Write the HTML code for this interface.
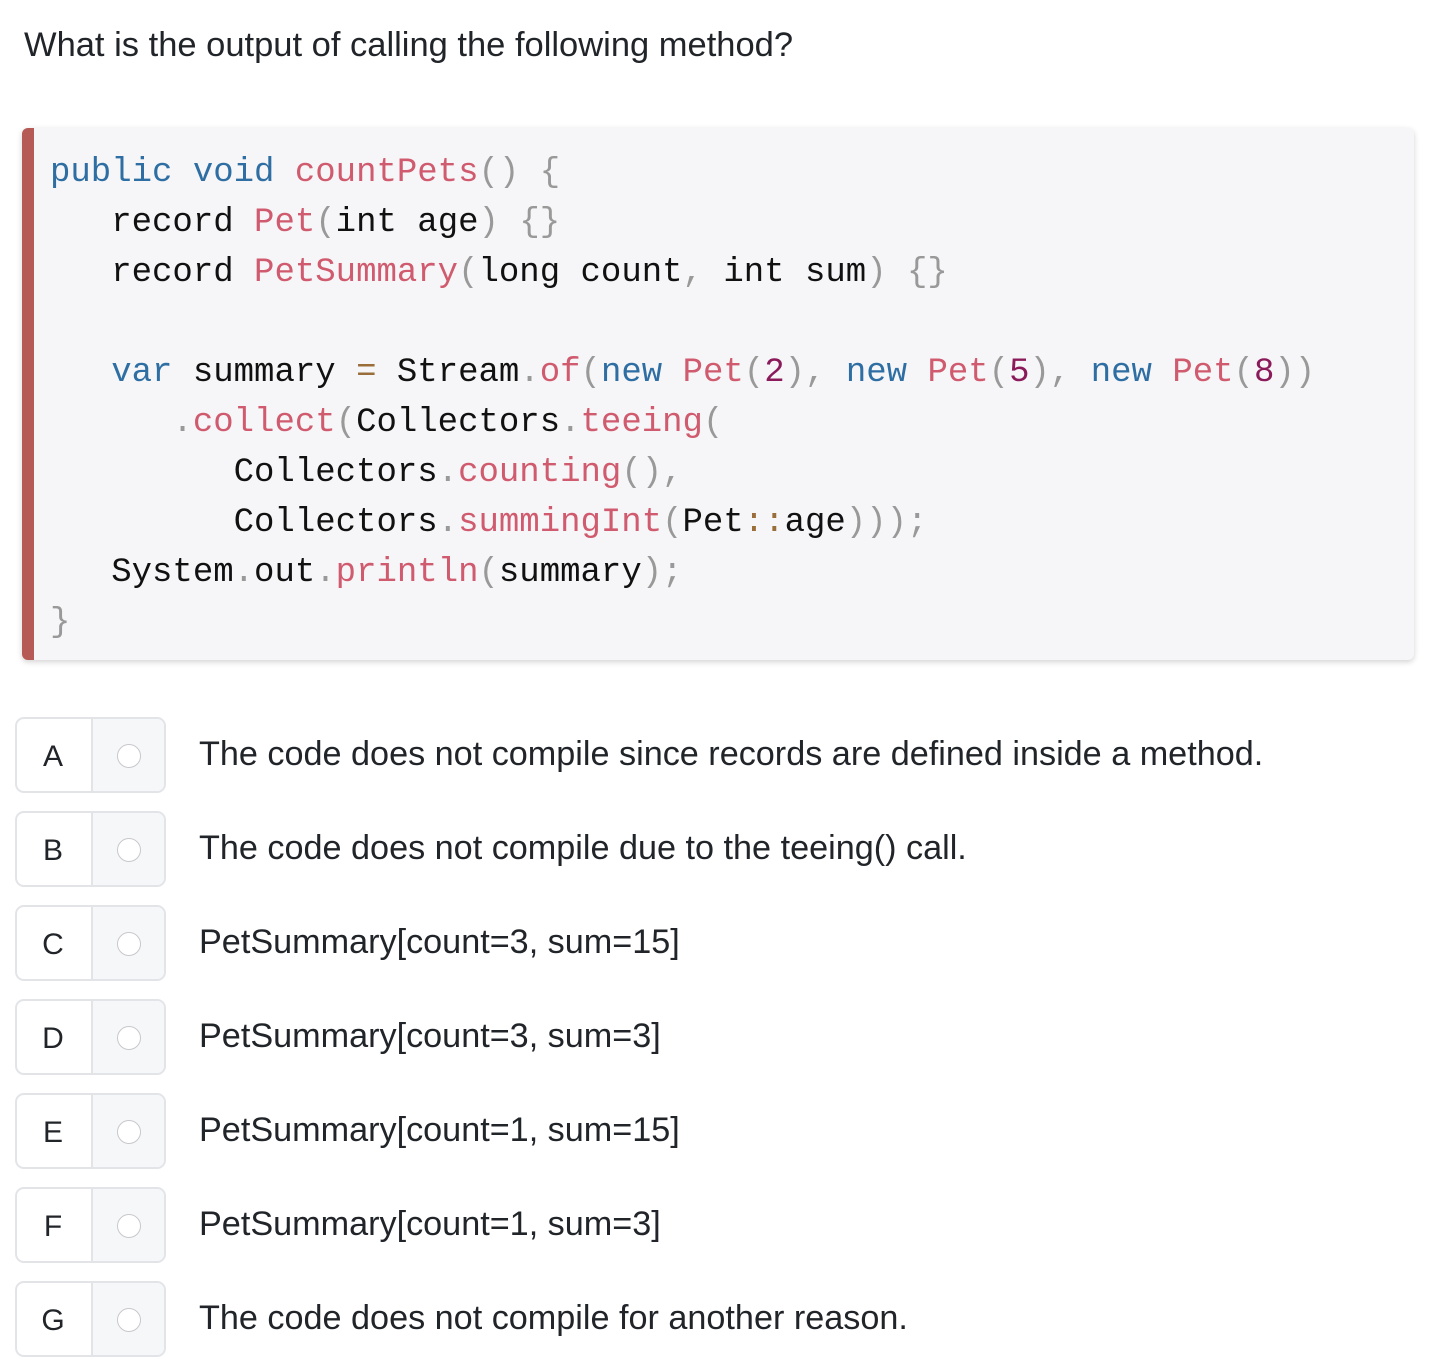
<!DOCTYPE html>
<html><head><meta charset="utf-8"><style>
body{margin:0;background:#fff;width:1452px;height:1348px;overflow:hidden;font-family:"Liberation Sans",sans-serif;color:#212529}
.q{position:absolute;left:24px;top:24px;font-size:34.5px;line-height:42px}
.code{position:absolute;left:22px;top:128px;width:1392px;height:532px;background:#f6f6f8;border-radius:6px;box-shadow:0 2px 6px rgba(0,0,0,.18);overflow:hidden}
.code:before{content:"";position:absolute;left:0;top:0;bottom:0;width:12px;background:#b55a54}
pre{margin:0;position:absolute;left:28px;top:20px;font-family:"Liberation Mono",monospace;font-size:34px;line-height:50px;color:#111}
.k{color:#2e6ea3}.f{color:#d05a6e}.p{color:#999}.n{color:#8b1a5a}.o{color:#9a6e3a}
.opt{position:absolute;left:15px;width:147px;height:72px;border:2px solid #e3e4e8;border-radius:9px;overflow:hidden;background:#fff}
.opt .l{position:absolute;left:0;top:0;width:72px;height:72px;line-height:76px;text-align:center;font-size:30px;color:#212529}
.opt .r{position:absolute;left:74px;top:0;width:74px;height:72px;background:#f6f7f9;border-left:2px solid #e3e4e8}
.opt .r i{position:absolute;left:24px;top:25px;width:24px;height:24px;border:1px solid #c8c8cc;border-radius:50%;background:#fff;box-sizing:border-box}
.t{position:absolute;left:199px;font-size:34.2px;line-height:40px;color:#212529}
</style></head><body>
<div class="q">What is the output of calling the following method?</div>
<div class="code"><pre><span class="k">public</span> <span class="k">void</span> <span class="f">countPets</span><span class="p">()</span> <span class="p">{</span>
   record <span class="f">Pet</span><span class="p">(</span>int age<span class="p">)</span> <span class="p">{}</span>
   record <span class="f">PetSummary</span><span class="p">(</span>long count<span class="p">,</span> int sum<span class="p">)</span> <span class="p">{}</span>

   <span class="k">var</span> summary <span class="o">=</span> Stream<span class="p">.</span><span class="f">of</span><span class="p">(</span><span class="k">new</span> <span class="f">Pet</span><span class="p">(</span><span class="n">2</span><span class="p">),</span> <span class="k">new</span> <span class="f">Pet</span><span class="p">(</span><span class="n">5</span><span class="p">),</span> <span class="k">new</span> <span class="f">Pet</span><span class="p">(</span><span class="n">8</span><span class="p">))</span>
      <span class="p">.</span><span class="f">collect</span><span class="p">(</span>Collectors<span class="p">.</span><span class="f">teeing</span><span class="p">(</span>
         Collectors<span class="p">.</span><span class="f">counting</span><span class="p">(),</span>
         Collectors<span class="p">.</span><span class="f">summingInt</span><span class="p">(</span>Pet<span class="o">::</span>age<span class="p">)));</span>
   System<span class="p">.</span>out<span class="p">.</span><span class="f">println</span><span class="p">(</span>summary<span class="p">);</span>
<span class="p">}</span></pre></div>

<div class="opt" style="top:717px"><div class="l">A</div><div class="r"><i></i></div></div>
<div class="t" style="top:734px">The code does not compile since records are defined inside a method.</div>
<div class="opt" style="top:811px"><div class="l">B</div><div class="r"><i></i></div></div>
<div class="t" style="top:828px">The code does not compile due to the teeing() call.</div>
<div class="opt" style="top:905px"><div class="l">C</div><div class="r"><i></i></div></div>
<div class="t" style="top:922px">PetSummary[count=3, sum=15]</div>
<div class="opt" style="top:999px"><div class="l">D</div><div class="r"><i></i></div></div>
<div class="t" style="top:1016px">PetSummary[count=3, sum=3]</div>
<div class="opt" style="top:1093px"><div class="l">E</div><div class="r"><i></i></div></div>
<div class="t" style="top:1110px">PetSummary[count=1, sum=15]</div>
<div class="opt" style="top:1187px"><div class="l">F</div><div class="r"><i></i></div></div>
<div class="t" style="top:1204px">PetSummary[count=1, sum=3]</div>
<div class="opt" style="top:1281px"><div class="l">G</div><div class="r"><i></i></div></div>
<div class="t" style="top:1298px">The code does not compile for another reason.</div>
</body></html>
